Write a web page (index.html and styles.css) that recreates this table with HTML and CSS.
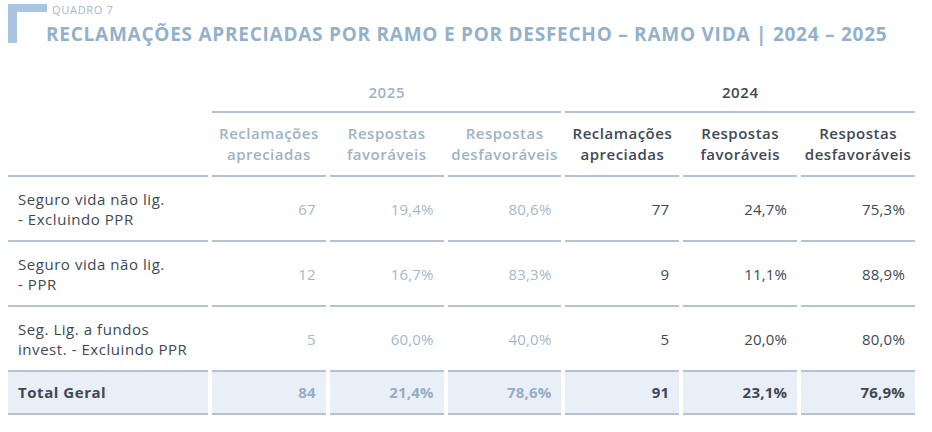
FILE: index.html
```html
<!DOCTYPE html>
<html lang="pt">
<head>
<meta charset="utf-8">
<title>Quadro 7</title>
<link rel="stylesheet" href="styles.css">
</head>
<body>
<header class="head">
  <div class="corner"></div>
  <div class="head-text">
    <div class="kicker">QUADRO 7</div>
    <h1 class="title">RECLAMAÇÕES APRECIADAS POR RAMO E POR DESFECHO – RAMO VIDA | 2024 – 2025</h1>
  </div>
</header>
<table class="tbl">
  <thead>
    <tr class="year-row">
      <th class="blank"></th>
      <th colspan="3" class="year y25">2025</th>
      <th colspan="3" class="year y24">2024</th>
    </tr>
    <tr class="sub-row">
      <th class="blank line"></th>
      <th class="sub y25">Reclamações<br>apreciadas</th>
      <th class="sub y25">Respostas<br>favoráveis</th>
      <th class="sub y25">Respostas<br>desfavoráveis</th>
      <th class="sub y24">Reclamações<br>apreciadas</th>
      <th class="sub y24">Respostas<br>favoráveis</th>
      <th class="sub y24">Respostas<br>desfavoráveis</th>
    </tr>
  </thead>
  <tbody>
    <tr class="row">
      <td class="label">Seguro vida não lig.<br>- Excluindo PPR</td>
      <td class="num y25">67</td><td class="num y25">19,4%</td><td class="num y25">80,6%</td>
      <td class="num y24">77</td><td class="num y24">24,7%</td><td class="num y24">75,3%</td>
    </tr>
    <tr class="row">
      <td class="label">Seguro vida não lig.<br>- PPR</td>
      <td class="num y25">12</td><td class="num y25">16,7%</td><td class="num y25">83,3%</td>
      <td class="num y24">9</td><td class="num y24">11,1%</td><td class="num y24">88,9%</td>
    </tr>
    <tr class="row">
      <td class="label">Seg. Lig. a fundos<br>invest. - Excluindo PPR</td>
      <td class="num y25">5</td><td class="num y25">60,0%</td><td class="num y25">40,0%</td>
      <td class="num y24">5</td><td class="num y24">20,0%</td><td class="num y24">80,0%</td>
    </tr>
    <tr class="total">
      <td class="label">Total Geral</td>
      <td class="num y25">84</td><td class="num y25">21,4%</td><td class="num y25">78,6%</td>
      <td class="num y24">91</td><td class="num y24">23,1%</td><td class="num y24">76,9%</td>
    </tr>
  </tbody>
</table>
</body>
</html>
```
FILE: styles.css
```css
html, body {
  margin: 0;
  padding: 0;
  background: #ffffff;
}
body {
  font-family: "Open Sans", "Noto Sans", "Liberation Sans", sans-serif;
  color: #3e4955;
  padding: 4px 0 0 8px;
}
.head {
  display: flex;
  align-items: flex-start;
  height: 68px;
}
.corner {
  width: 39px;
  height: 39px;
  border-top: 8px solid #a9c5e1;
  border-left: 9px solid #a9c5e1;
  box-sizing: border-box;
  flex: none;
}
.head-text {
  margin-left: -1px;
}
.kicker {
  font-size: 11px;
  font-weight: 400;
  color: #a3b8cc;
  line-height: 11px;
  margin-left: 6px;
  letter-spacing: 0.7px;
}
.title {
  margin: 8px 0 0 0;
  font-size: 19px;
  line-height: 22px;
  font-weight: 700;
  color: #94b1cb;
  white-space: nowrap;
  letter-spacing: 0.75px;
}
.tbl {
  border-collapse: separate;
  border-spacing: 4px 0;
  margin-left: -4px;
  width: 915px;
  table-layout: fixed;
  font-size: 15px;
}
.tbl th, .tbl td {
  padding: 0;
}
.blank { width: 200px; }
.year-row th { height: 39px; }
.year {
  font-size: 15px;
  font-weight: 600;
  letter-spacing: 0.6px;
  border-bottom: 2px solid #b3c3d4;
  vertical-align: middle;
  padding-top: 2px;
}
.y25 { color: #9db3c8; }
.y24 { color: #3e4955; }
.sub-row th { height: 62px; }
.sub {
  font-weight: 600;
  font-size: 15px;
  line-height: 21px;
  letter-spacing: 0.5px;
  border-bottom: 2px solid #b3c3d4;
  text-align: center;
  vertical-align: middle;
}
.line { border-bottom: 2px solid #b3c3d4; }
.row td {
  height: 63px;
  border-bottom: 2px solid #b3c3d4;
  vertical-align: middle;
}
.label {
  padding-left: 10px !important;
  line-height: 20px;
  font-weight: 400;
  letter-spacing: 0.55px;
  color: #3e4955;
}
.num {
  text-align: right;
  padding-right: 10px !important;
  font-weight: 400;
  letter-spacing: 0.2px;
}
.num.y25 { color: #a6b8cc; }
.total td {
  height: 39px;
  background: #e9eff6;
  border-bottom: 2px solid #b3c3d4;
  font-weight: 700;
  vertical-align: middle;
  padding-bottom: 2px;
}
.total .label { font-weight: 700; }
.total .num { font-weight: 700; }
.total .num.y25 { color: #97adc3; }
```
